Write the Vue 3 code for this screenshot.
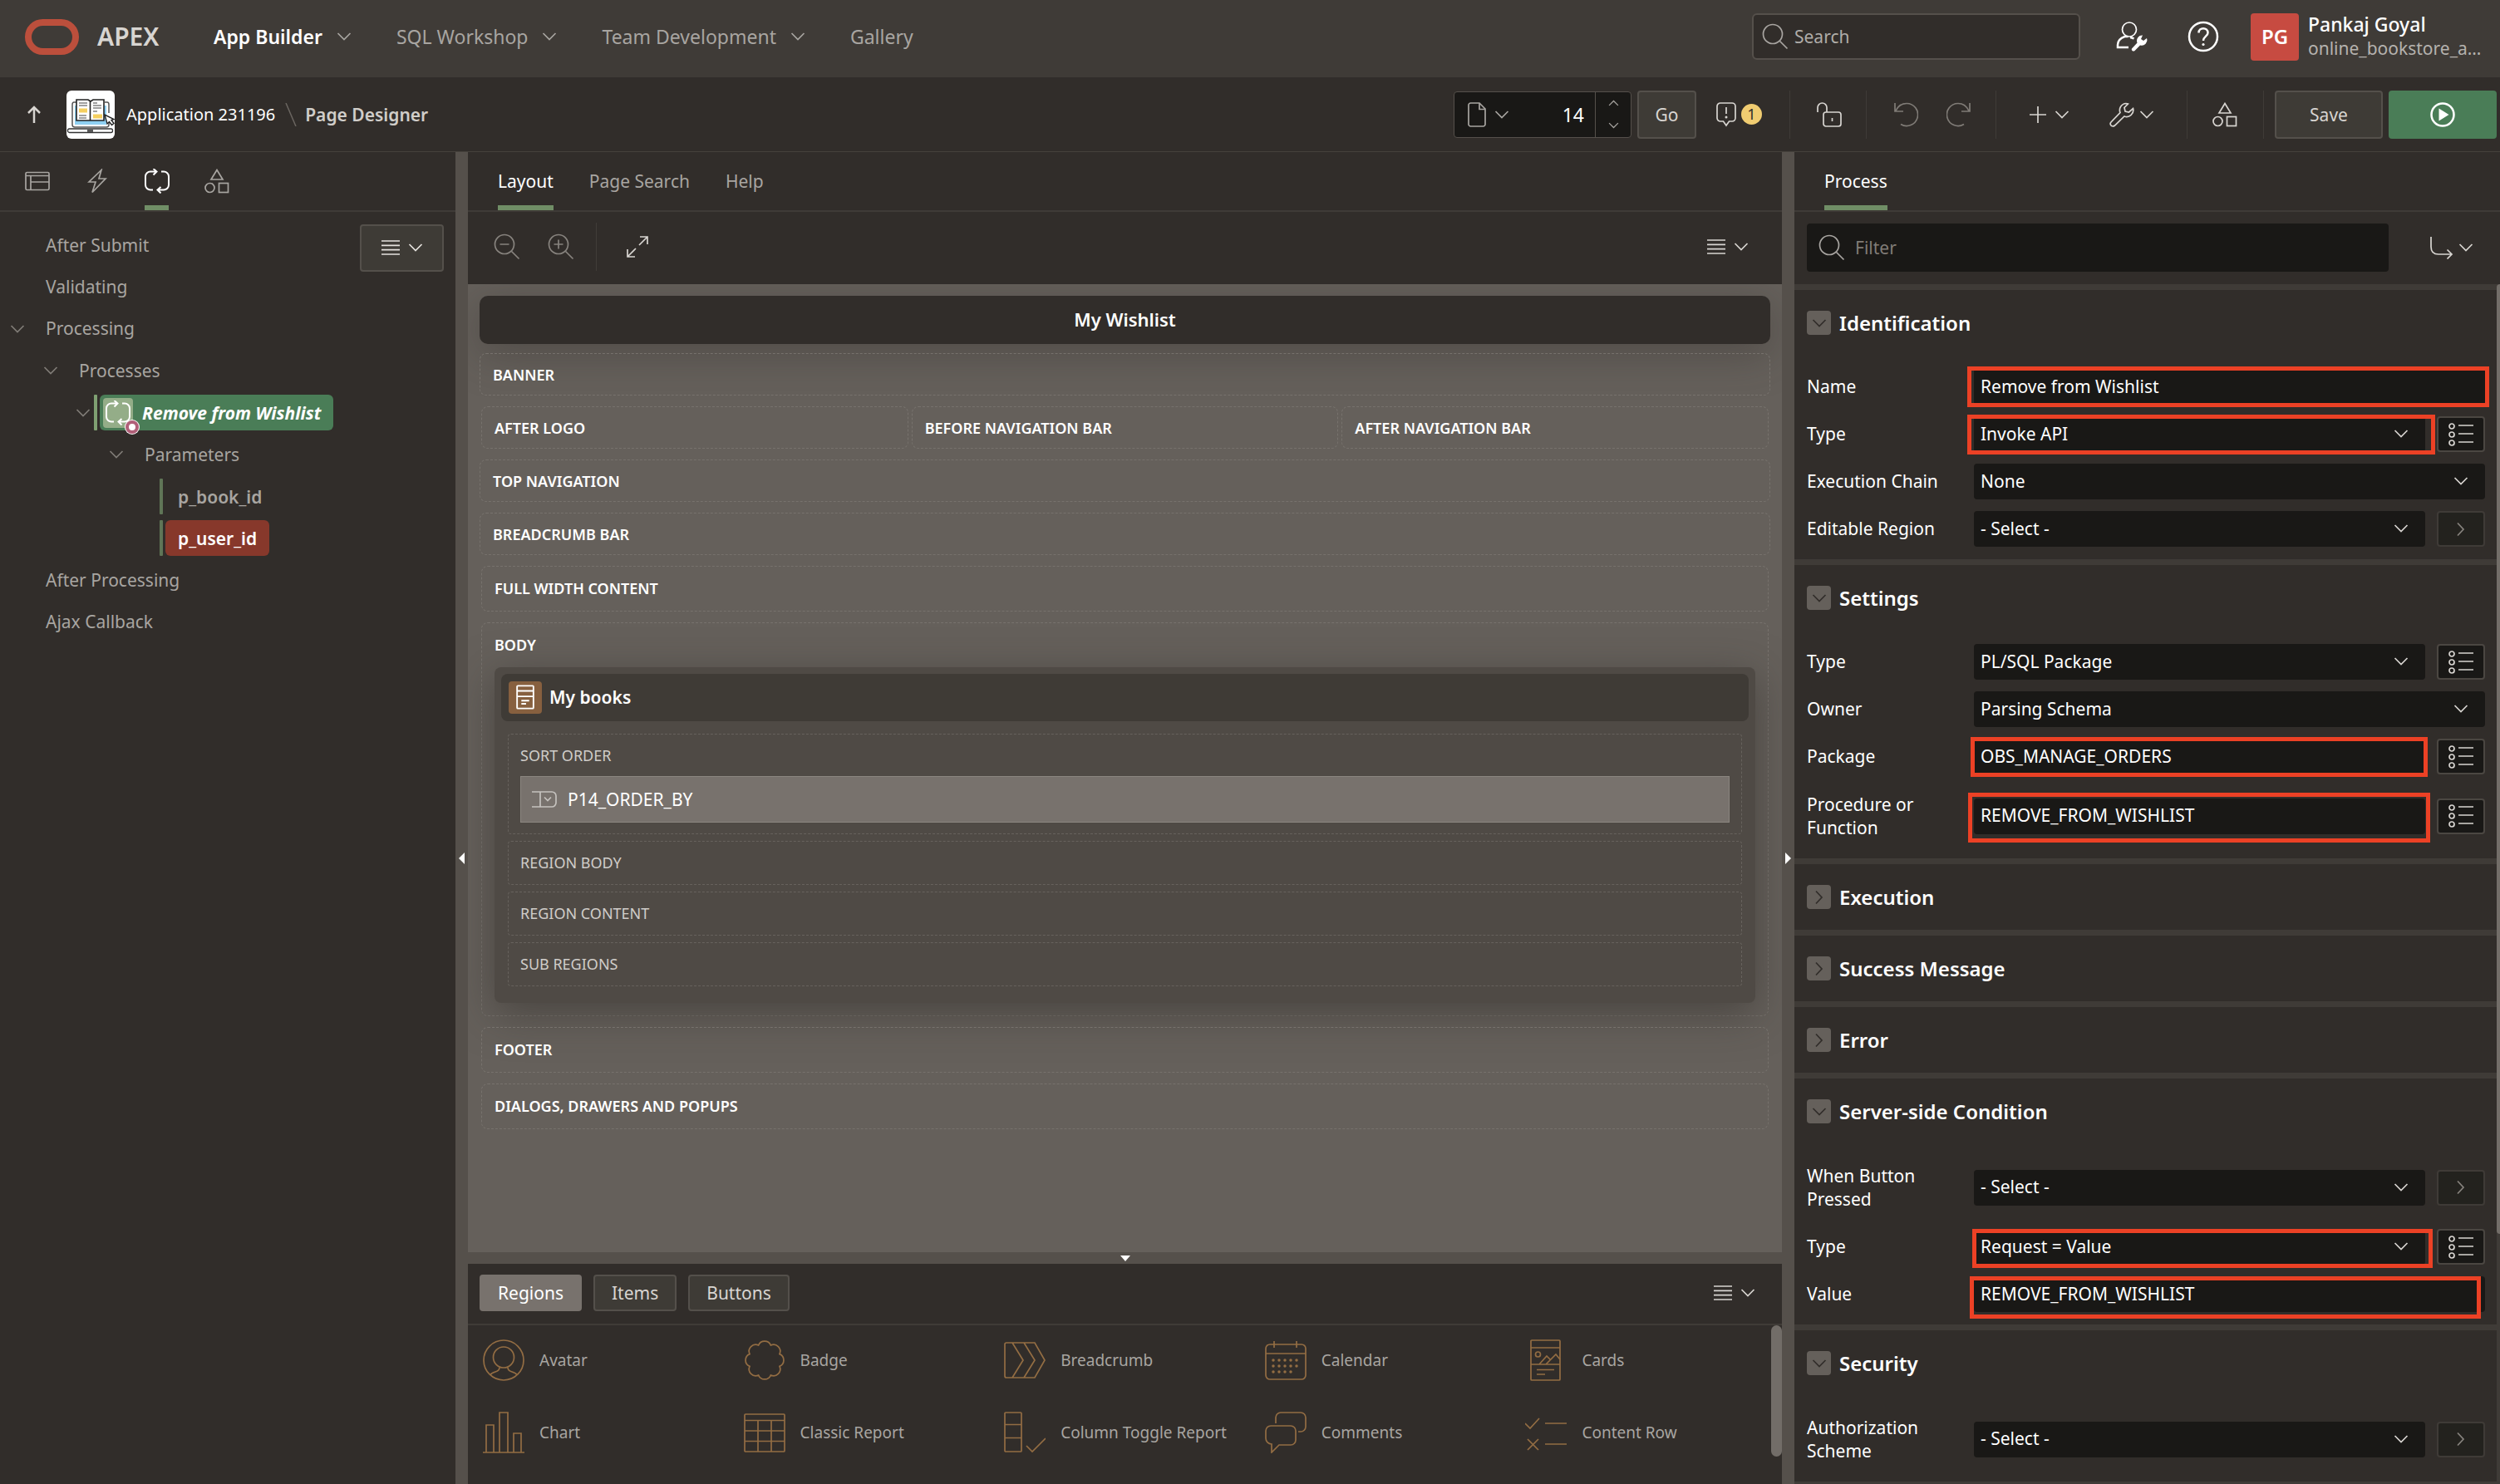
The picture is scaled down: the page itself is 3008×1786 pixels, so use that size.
<script setup>
import { h, reactive, ref } from 'vue'

const glyphs = {
  chevron: ['0 0 18 12', '<path d="M1.5 2 9 9.5 16.500 2"/>'],
  right: ['0 0 12 18', '<path d="M2 1.500 9 9 2 16.500"/>'],
  up: ['0 0 18 22', '<path d="M9 21V2M2 9 9 2 16 9" stroke-width="2.500"/>'],
  search: ['0 0 32 32', '<circle cx="13" cy="13" r="11.500"/><path d="m21.500 21.500 9 9"/>'],
  zoomOut: ['0 0 32 32', '<circle cx="13" cy="13" r="11.500"/><path d="m21.500 21.500 9 9M7.500 13h11"/>'],
  zoomIn: ['0 0 32 32', '<circle cx="13" cy="13" r="11.500"/><path d="m21.500 21.500 9 9M7.500 13h11M13 7.500v11"/>'],
  expand: ['0 0 28 28', '<path d="M17 2h9v9M26 2 16 12M11 26H2v-9M2 26l10-10"/>'],
  menu: ['0 0 22 20', '<path d="M0 2h22M0 7.300h22M0 12.600h22M0 18h22"/>'],
  admin: ['0 0 38 38', '<circle cx="16" cy="10.500" r="8.500"/><path d="M15 32H2v-3c0-5 3-8 8.500-10h4M17 20c2 .3 3 .8 4.500 1.500" stroke-width="2.500"/><path d="M32 17.500a6.500 6.500 0 0 0-6.500 9l-6.500 7c-1 2 1.500 4 3.300 2.700l6.700-6.800a6.500 6.500 0 0 0 8-8.400l-4 3-3-2z" fill="currentColor" stroke="none"/>'],
  help: ['0 0 38 38', '<circle cx="19" cy="19" r="17" stroke-width="2.500"/><path d="M13.500 14.500c0-7 11-7 11 0 0 4-5.500 4.500-5.500 9.500" stroke-width="2.500"/><circle cx="19" cy="28.500" r="1.600" fill="currentColor" stroke="none"/>'],
  file: ['0 0 22 30', '<path d="M1 3.500A2.500 2.500 0 0 1 3.500 1H14l7 7v18.500a2.500 2.500 0 0 1-2.500 2.500h-15A2.500 2.500 0 0 1 1 26.500zM14 1v7.500h7"/>'],
  comment: ['0 0 24 30', '<path d="M5 1h14a4 4 0 0 1 4 4v14a4 4 0 0 1-4 4h-3.500L12 28l-3.500-5H5a4 4 0 0 1-4-4V5a4 4 0 0 1 4-4zM12 6v8"/><circle cx="12" cy="18" r="1.500" fill="currentColor" stroke="none"/>'],
  unlock: ['0 0 30 30', '<path d="M1 12V6.500a5.500 5.500 0 0 1 11 0V12"/><rect x="8" y="12" width="21" height="17" rx="3"/><path d="M18.500 19v4"/>'],
  undo: ['0 0 30 30', '<path d="M2 1v10h10M3 10.500C6 4 11 1.500 16 1.500a13.500 13.500 0 1 1-7 25"/>'],
  redo: ['0 0 30 30', '<path d="M28 1v10H18M27 10.500C24 4 19 1.500 14 1.500a13.500 13.500 0 1 0 7 25"/>'],
  plus: ['0 0 20 20', '<path d="M10 0v20M0 10h20"/>'],
  wrench: ['0 0 30 30', '<path d="M20 1.500a8 8 0 0 0-7 11L2 24c-2.500 3 1.500 6.500 4.500 4L18 17a8 8 0 0 0 10.500-9.500l-5 4.500-4.500-1-1-4.500 4.500-4.500c-.8-.4-1.600-.5-2.500-.5z"/>'],
  shapes: ['0 0 30 30', '<path d="M15 1.500 8 13h14z"/><circle cx="6.500" cy="23" r="5.500"/><rect x="17.500" y="17.500" width="11" height="11"/>'],
  play: ['0 0 30 30', '<circle cx="15" cy="15" r="13.500" stroke-width="2.500"/><path d="M10.500 7.500 22.500 15l-12 7.500z" fill="currentColor" stroke="none"/>'],
  page: ['0 0 30 24', '<rect x="1" y="1.500" width="28" height="21" rx="1.500"/><path d="M1 5.500h28M7 5.500v17M7 13h22"/>'],
  bolt: ['0 0 24 30', '<path d="M17 1.500 2 16h8L6 28.500 22 12h-8z"/>'],
  process: ['0 0 30 30', '<path d="M10 25.500H7a6 6 0 0 1-6-6v-10a6 6 0 0 1 6-6h7M10.500 0 14.500 3.500l-4 4M20 3.500h3a6 6 0 0 1 6 6v10a6 6 0 0 1-6 6h-7M19.500 22 15.500 25.500l4 4" stroke-width="2"/>'],
  goto: ['0 0 28 28', '<path d="M1 1v12c0 6 3 9 9 9h16M20.500 16.500 26 22l-5.500 5.500"/>'],
  list: ['0 0 30 28', '<circle cx="4" cy="4" r="3"/><circle cx="4" cy="14" r="3"/><circle cx="4" cy="24" r="3"/><path d="M12 3h18M12 13h18M12 23h18"/>'],
  report: ['0 0 24 32', '<rect x="1.500" y="1.500" width="21" height="29" rx="1"/><path d="M1.500 8h21M1.500 15h21M7 20.500h10M7 24.500h6"/>'],
  selectItem: ['0 0 30 20', '<path d="M0 1h24a5 5 0 0 1 5 5v8a5 5 0 0 1-5 5H0M10 1v18M15 7.500l4 4 4-4"/>'],
  avatar: ['0 0 50 50', '<circle cx="25" cy="25" r="24"/><circle cx="25" cy="21.500" r="12.500"/><path d="M20 34c0 3-2 4-5 5s-5 2-6 3.500M30 34c0 3 2 4 5 5s5 2 6 3.500"/>'],
  badge: ['0 0 50 50', '<path d="M17.600 7a8 8 0 0 1 14.800 0A8 8 0 0 1 43 17.600a8 8 0 0 1 0 14.800A8 8 0 0 1 32.400 43a8 8 0 0 1-14.800 0A8 8 0 0 1 7 32.400a8 8 0 0 1 0-14.800A8 8 0 0 1 17.600 7z"/>'],
  breadcrumb: ['0 0 50 50', '<path d="M3 4h34l12 21-12 21H3a2 2 0 0 1-2-2V6a2 2 0 0 1 2-2zM10 4l13 21-13 21M24 4l13 21-13 21"/>'],
  calendar: ['0 0 50 50', '<rect x="1" y="6" width="48" height="42" rx="5"/><path d="M1 17h48M11 2v8M38 2v8"/><path d="M10 25h32M10 32h32M10 39h26" stroke-width="3.500" stroke-dasharray="0 7" stroke-linecap="round"/>'],
  cards: ['0 0 50 50', '<rect x="7" y="1" width="35" height="48" rx="1"/><path d="M7 10h35M7 30h35M14 36.500h21M14 42h10M17 30l9-10 5 5M25 30l12-12 5 6"/><circle cx="15.500" cy="18" r="3"/>'],
  chart: ['0 0 50 50', '<path d="M0 49h50M4 49V16h9v33M20 49V1h10v48M37 49V26h9v23"/>'],
  table: ['0 0 50 50', '<rect x="1" y="3" width="48" height="45" rx="1"/><path d="M1 10.500h48M1 23h48M1 35.500h48M17 10.500V48M33 10.500V48"/>'],
  columns: ['0 0 50 50', '<rect x="1" y="1" width="20" height="47" rx="1"/><path d="M1 15.500h20M1 31.500h20M27 41l7 7 16-16"/>'],
  comments: ['0 0 50 50', '<path d="M8 39a7 7 0 0 1-7-7V23a6 6 0 0 1 6-6h24a6 6 0 0 1 6 6v11a6 6 0 0 1-6 6H17l-9 9zM13 14V7a6 6 0 0 1 6-6h24a6 6 0 0 1 6 6v11a6 6 0 0 1-6 6h-3"/>'],
  contentRow: ['0 0 50 50', '<path d="M0 14l6 6L17 8M24 14h26M3 33l13 13M16 33 3 46M24 39h26"/>'],
  form: ['0 0 50 50', '<rect x="1" y="1" width="48" height="48" rx="2"/>'],
  circle: ['0 0 50 50', '<circle cx="25" cy="10" r="9"/>'],
}
const Icon = (p) => {
  const [viewBox, innerHTML] = glyphs[p.name]
  return h('svg', {
    viewBox, innerHTML, fill: 'none', stroke: 'currentColor', 'stroke-width': 1.7,
    'aria-hidden': 'true', width: viewBox.split(' ')[2], height: viewBox.split(' ')[3],
  })
}
Icon.props = ['name']

const nav = [
  { label: 'App Builder', menu: true, active: true },
  { label: 'SQL Workshop', menu: true },
  { label: 'Team Development', menu: true },
  { label: 'Gallery' },
]
const treeTabs = ['page', 'bolt', 'process', 'shapes']
const tree = [
  { label: 'After Submit', level: 0 },
  { label: 'Validating', level: 0 },
  { label: 'Processing', level: 0, open: true },
  { label: 'Processes', level: 1, open: true },
  { label: 'Remove from Wishlist', level: 2, open: true, bar: true, selected: true },
  { label: 'Parameters', level: 3, open: true },
  { label: 'p_book_id', level: 4, bar: true },
  { label: 'p_user_id', level: 4, bar: true, error: true },
  { label: 'After Processing', level: 0 },
  { label: 'Ajax Callback', level: 0 },
]
const galleryTabs = ['Regions', 'Items', 'Buttons']
const gallery = [
  ['avatar', 'Avatar'], ['badge', 'Badge'], ['breadcrumb', 'Breadcrumb'], ['calendar', 'Calendar'], ['cards', 'Cards'],
  ['chart', 'Chart'], ['table', 'Classic Report'], ['columns', 'Column Toggle Report'], ['comments', 'Comments'], ['contentRow', 'Content Row'],
  ['', ''], ['form', ''], ['', ''], ['circle', ''], ['form', ''],
]
const innerSlots = ['Region Body', 'Region Content', 'Sub Regions']
const pageNo = ref('14')

// mark: top, right, bottom and left distance of the highlight from its field
const sections = reactive([
  { title: 'Identification', fields: [
    { label: 'Name', value: 'Remove from Wishlist', mark: [-3, -5, -3, -8] },
    { label: 'Type', value: 'Invoke API', select: true, side: 'list', mark: [-2, -12, -3, -8] },
    { label: 'Execution Chain', value: 'None', select: true },
    { label: 'Editable Region', value: '- Select -', select: true, side: 'right' },
  ] },
  { title: 'Settings', fields: [
    { label: 'Type', value: 'PL/SQL Package', select: true, side: 'list' },
    { label: 'Owner', value: 'Parsing Schema', select: true },
    { label: 'Package', value: 'OBS_MANAGE_ORDERS', side: 'list', mark: [-2, -3, -3, -4] },
    { label: 'Procedure or Function', value: 'REMOVE_FROM_WISHLIST', side: 'list', tall: true, mark: [-7, -6, -10, -7] },
  ] },
  { title: 'Execution' },
  { title: 'Success Message' },
  { title: 'Error' },
  { title: 'Server-side Condition', fields: [
    { label: 'When Button Pressed', value: '- Select -', select: true, side: 'right', tall: true },
    { label: 'Type', value: 'Request = Value', select: true, side: 'list', mark: [0, -9, -4, -2] },
    { label: 'Value', value: 'REMOVE_FROM_WISHLIST', mark: [0, 5, -8, -5] },
  ] },
  { title: 'Security', fields: [
    { label: 'Authorization Scheme', value: '- Select -', select: true, side: 'right', tall: true },
  ] },
])
const inset = (m) => ({ inset: m.map((n) => n + 'px').join(' ') })
</script>

<template>
  <div class="app">
    <header class="topbar">
      <a class="brand" href="#">
        <svg width="65" height="43" viewBox="0 0 65 43" aria-hidden="true"><rect x="4" y="4" width="57" height="35" rx="17.500" fill="none" stroke="#bc4f3c" stroke-width="8" /></svg>
        <span>APEX</span>
      </a>
      <nav class="nav">
        <a v-for="n in nav" :key="n.label" href="#" :class="{ active: n.active }">{{ n.label }}<Icon v-if="n.menu" name="chevron" /></a>
      </nav>
      <label class="search"><Icon name="search" /><input type="text" placeholder="Search" aria-label="Search" /></label>
      <button class="bare admin" aria-label="Administration"><Icon name="admin" /></button>
      <button class="bare help" aria-label="Help"><Icon name="help" /></button>
      <div class="user">
        <span class="initials">PG</span>
        <div class="who"><strong>Pankaj Goyal</strong><span>online_bookstore_a…</span></div>
      </div>
    </header>

    <div class="toolbar">
      <button class="bare up" aria-label="Up"><Icon name="up" /></button>
      <svg class="appicon" width="58" height="58" viewBox="0 0 58 58" aria-hidden="true">
        <rect width="58" height="58" rx="6" fill="#fff" />
        <rect x="10" y="18" width="38" height="23" fill="#8fd0f2" />
        <path d="M12 14H9q-2 0-2 3v24q0 3 3 3h38q3 0 3-3v-6M46 14h3q2 0 2 3v10" fill="none" stroke="#555" stroke-width="1.500" />
        <path d="M12 11h14l3 2 3-2h13v25H12z" fill="#fff" stroke="#222" stroke-width="1.600" />
        <path d="M28.500 13v23" stroke="#222" stroke-width="1.600" />
        <path d="M15 15h10M15 18h10M15 30h9M15 33h9M32 15h5M32 18h10M32 21h10M32 25h5" stroke="#444" stroke-width="1.200" />
        <path d="M15 21.500h10v5H15zM32 28.500h11v5H32z" fill="#f5cf5f" />
        <path d="m46 29 3 11 2.500-2.500 3 4 2.500-2-3-4 3-1z" fill="#fff" stroke="#222" stroke-width="1.400" />
        <rect x="1.500" y="46" width="54" height="4.500" rx="2" fill="#fff" stroke="#333" stroke-width="1.300" />
        <rect x="25" y="47" width="7" height="3" fill="#555" />
      </svg>
      <a class="crumb" href="#">Application 231196</a>
      <svg class="slash" width="14" height="28" viewBox="0 0 14 28" aria-hidden="true"><path d="m1 0 12 28" stroke="#6b6661" stroke-width="1.500" /></svg>
      <a class="crumb here" href="#">Page Designer</a>
      <div class="pagebox">
        <button class="bare pick" aria-label="Pages"><Icon name="file" /><Icon name="chevron" /></button>
        <input v-model="pageNo" type="text" aria-label="Page number" />
        <span class="step">
          <button class="bare" aria-label="Next page"><Icon name="chevron" class="flip" /></button>
          <button class="bare" aria-label="Previous page"><Icon name="chevron" /></button>
        </span>
      </div>
      <button class="btn go">Go</button>
      <button class="bare msgs" aria-label="Messages"><Icon name="comment" /><span class="count">1</span></button>
      <div class="grp lock"><button class="bare" aria-label="Unlock"><Icon name="unlock" /></button></div>
      <div class="grp history">
        <button class="bare" aria-label="Undo"><Icon name="undo" /></button>
        <button class="bare" aria-label="Redo"><Icon name="redo" /></button>
      </div>
      <div class="grp create">
        <button class="bare" aria-label="Create"><Icon name="plus" /><Icon name="chevron" /></button>
        <button class="bare tight" aria-label="Utilities"><Icon name="wrench" /><Icon name="chevron" /></button>
      </div>
      <div class="grp shared"><button class="bare" aria-label="Shared components"><Icon name="shapes" /></button></div>
      <div class="grp actions">
        <button class="btn wide">Save</button>
        <button class="btn wide run" aria-label="Run"><Icon name="play" /></button>
      </div>
    </div>

    <main class="work">
      <aside class="left">
        <div class="tabs icons">
          <button v-for="t in treeTabs" :key="t" class="tab" :class="{ on: t === 'process' }" :aria-label="t"><Icon :name="t" /></button>
        </div>
        <div class="treewrap">
          <ul class="tree">
            <li v-for="n in tree" :key="n.label" :class="'l' + n.level">
              <Icon v-if="n.open" name="chevron" class="twist" />
              <i v-if="n.bar" class="bar" :class="{ lit: n.selected }"></i>
              <span class="node" :class="{ selected: n.selected, error: n.error, strong: n.level === 4 }">
                <span v-if="n.selected" class="nicon"><Icon name="process" /><i class="dot"></i></span>{{ n.label }}
              </span>
            </li>
          </ul>
          <button class="btn treemenu" aria-label="Tree menu"><Icon name="menu" /><Icon name="chevron" /></button>
        </div>
      </aside>
      <div class="split"><i class="arrow west"></i></div>

      <section class="center">
        <div class="tabs">
          <button class="tab on">Layout</button><button class="tab">Page Search</button><button class="tab">Help</button>
        </div>
        <div class="ltools">
          <button class="bare dim" aria-label="Zoom out"><Icon name="zoomOut" /></button>
          <button class="bare dim" aria-label="Zoom in"><Icon name="zoomIn" /></button>
          <i class="rule"></i>
          <button class="bare" aria-label="Expand"><Icon name="expand" /></button>
          <button class="bare menubtn" aria-label="Layout menu"><Icon name="menu" /><Icon name="chevron" /></button>
        </div>
        <div class="canvas">
          <h1>My Wishlist</h1>
          <div class="slot">Banner</div>
          <div class="slots"><div class="slot">After Logo</div><div class="slot">Before Navigation Bar</div><div class="slot">After Navigation Bar</div></div>
          <div class="slot">Top Navigation</div>
          <div class="slot">Breadcrumb Bar</div>
          <div class="slot main">Full Width Content</div>
          <div class="slot main body">
            Body
            <div class="region">
              <h2><span class="ricon"><Icon name="report" /></span>My books</h2>
              <div class="inner first">
                Sort Order
                <div class="item"><Icon name="selectItem" />P14_ORDER_BY</div>
              </div>
              <div v-for="s in innerSlots" :key="s" class="inner">{{ s }}</div>
            </div>
          </div>
          <div class="slot main">Footer</div>
          <div class="slot main">Dialogs, Drawers and Popups</div>
        </div>
        <div class="hsplit"><i class="arrow south"></i></div>
        <div class="gtools">
          <button v-for="(t, i) in galleryTabs" :key="t" class="btn" :class="{ on: i === 0 }">{{ t }}</button>
          <button class="bare menubtn" aria-label="Gallery menu"><Icon name="menu" /><Icon name="chevron" /></button>
        </div>
        <div class="gallery">
          <ul>
            <li v-for="(g, i) in gallery" :key="i"><Icon v-if="g[0]" :name="g[0]" />{{ g[1] }}</li>
          </ul>
          <div class="track"><i></i></div>
        </div>
      </section>
      <div class="split"><i class="arrow east"></i></div>

      <aside class="right">
        <div class="tabs"><button class="tab on">Process</button></div>
        <div class="filter">
          <label><Icon name="search" /><input type="text" placeholder="Filter" aria-label="Filter" /></label>
          <button class="bare" aria-label="Go to group"><Icon name="goto" /><Icon name="chevron" /></button>
        </div>
        <div class="props">
          <div class="groups">
            <section v-for="(s, si) in sections" :key="s.title" class="group">
              <h3><button class="toggle" :aria-label="'Toggle ' + s.title"><Icon :name="s.fields ? 'chevron' : 'right'" /></button>{{ s.title }}</h3>
              <div v-if="s.fields" class="fields">
                <div v-for="(f, fi) in s.fields" :key="f.label" class="field" :class="{ tall: f.tall }">
                  <label :for="`f${si}-${fi}`">{{ f.label }}</label>
                  <div class="ctl">
                    <template v-if="f.select">
                      <select :id="`f${si}-${fi}`" v-model="f.value"><option>{{ f.value }}</option></select>
                      <Icon name="chevron" class="drop" />
                    </template>
                    <input v-else :id="`f${si}-${fi}`" v-model="f.value" type="text" />
                    <i v-if="f.mark" class="mark" :style="inset(f.mark)"></i>
                  </div>
                  <button v-if="f.side" class="side" :class="f.side" :aria-label="'Pick ' + f.label"><Icon :name="f.side" /></button>
                </div>
              </div>
            </section>
          </div>
          <div class="vtrack"><i></i></div>
        </div>
      </aside>
    </main>
  </div>
</template>

<style>
body { margin: 0; background: #312d2a; }
</style>

<style scoped>
.app, .app * { box-sizing: border-box; }
.app { display: flex; flex-direction: column; height: 100vh; overflow: hidden; background: #312d2a; color: #fff; font: 21px/28px "Noto Sans", "Open Sans", sans-serif; }
svg { flex: none; display: block; }
a { color: inherit; text-decoration: none; }
button, input, select { font: inherit; color: inherit; margin: 0; }
button { padding: 0; border: 0; background: none; }
input { border: 0; background: none; outline: 0; min-width: 0; }
ul { list-style: none; margin: 0; padding: 0; }
h1, h2, h3 { margin: 0; font: inherit; }
.bare { display: flex; align-items: center; color: #d8d5d1; }
.btn { display: flex; align-items: center; justify-content: center; border: 2px solid #54504b; border-radius: 4px; background: #3e3b36; color: #d8d5d1; }
.flip { transform: rotate(180deg); }

.topbar { flex: none; display: flex; align-items: center; height: 93px; padding: 0 4px 4px 30px; background: #3f3b37; border-bottom: 1px solid #403c38; }
.brand { display: flex; align-items: center; width: 227px; gap: 22px; color: #d8d5d1; font-size: 30px; font-weight: 600; }
.nav { display: flex; align-items: center; gap: 54px; font-size: 23px; color: #a8a5a1; }
.nav a { display: flex; align-items: center; gap: 17px; }
.nav .active { color: #fff; font-weight: 600; }
.nav svg { color: #a8a5a1; }
.search { display: flex; align-items: center; gap: 5px; width: 395px; height: 56px; margin-left: auto; padding: 0 10px; border: 2px solid #55504b; border-radius: 6px; background: #312d2a; color: #a8a5a1; }
.search input { flex: 1; }
.search input::placeholder { color: #b0ada9; opacity: 1; }
.admin, .help { color: #fff; }
.admin { margin-left: 43px; }
.help { margin-left: 48px; }
.user { display: flex; align-items: center; gap: 11px; width: 296px; margin-left: 38px; }
.initials { display: flex; align-items: center; justify-content: center; width: 58px; height: 57px; border-radius: 4px; background: #c74b41; font-size: 24px; font-weight: 600; }
.who { display: flex; flex-direction: column; line-height: 29px; }
.who strong { font-weight: 500; font-size: 23px; }
.who span { color: #b5b2ae; }

.toolbar { flex: none; display: flex; align-items: center; height: 90px; padding: 0 4px 0 32px; border-bottom: 1px solid #45413c; }
.up { width: 48px; }
.appicon { margin-right: 14px; }
.slash { margin: 0 10px 0 12px; }
.crumb { font-size: 20px; }
.crumb.here { color: #d0cdc9; font-size: 21px; font-weight: 600; }
.pagebox { display: flex; align-items: stretch; width: 214px; height: 56px; margin-left: auto; border: 1px solid #55504b; border-radius: 4px; background: #191816; font-size: 23px; }
.pick { gap: 10px; padding-left: 16px; color: #a8a5a1; }
.pagebox input { flex: 1; width: 0; padding: 0 13px 0 0; text-align: right; }
.step { display: flex; flex-direction: column; justify-content: space-around; width: 43px; border-left: 1px solid #55504b; }
.step button { justify-content: center; color: #a8a5a1; }
.step svg { width: 13px; }
.go { width: 71px; height: 58px; margin: 0 24px 0 7px; }
.msgs { gap: 6px; width: 88px; }
.count { width: 25px; height: 25px; border-radius: 50%; background: #f0cc71; color: #312d2a; font-size: 18px; line-height: 25px; text-align: center; }
.grp { display: flex; align-items: center; height: 58px; border-left: 1px solid #3f3b37; }
.lock { width: 92px; padding-left: 32px; }
.history { width: 156px; padding-left: 32px; gap: 34px; }
.history button { color: #807c77; }
.create { width: 230px; padding-left: 40px; gap: 48px; }
.create button { gap: 10px; }
.create .tight { gap: 6px; }
.shared { width: 92px; padding-left: 30px; }
.actions { padding-left: 13px; gap: 7px; }
.wide { width: 130px; height: 58px; }
.run { border: 0; background: #4a7d57; color: #fff; }

.work { flex: 1; display: flex; min-height: 0; }
.left { flex: none; width: 548px; }
.right { flex: none; width: 849px; display: flex; flex-direction: column; }
.center { flex: 1; min-width: 0; display: flex; flex-direction: column; }
.split { flex: none; display: flex; align-items: center; justify-content: center; width: 15px; padding-top: 96px; background: #55504b; }
.hsplit { flex: none; display: flex; align-items: center; justify-content: center; height: 14px; background: #55504b; }
.arrow { border: 6px solid transparent; }
.west { border-width: 7px 7px 7px 0; border-right-color: #fff; }
.east { border-width: 7px 0 7px 7px; border-left-color: #fff; }
.south { border-width: 7px 6px 0; border-top-color: #fff; }

.tabs { flex: none; display: flex; gap: 43px; height: 72px; padding-left: 36px; border-bottom: 2px solid #3f3b37; }
.tab { height: 70px; padding-top: 5px; border-bottom: 6px solid transparent; color: #a8a5a1; }
.tab.on { color: #fff; border-color: #708e66; }
.icons { padding-left: 30px; gap: 43px; }
.icons .tab { display: flex; align-items: center; justify-content: center; width: 29px; padding-top: 6px; }

.treewrap { display: flex; justify-content: space-between; padding: 15px 14px 0 0; }
.treemenu { width: 101px; height: 57px; padding-bottom: 2px; gap: 10px; color: #e5e2de; }
.tree { display: grid; grid-auto-rows: 1fr; height: 504px; color: #a8a5a1; }
.tree li { display: flex; align-items: center; position: relative; }
.l0 { padding-left: 55px; }
.l1 { padding-left: 95px; }
.l2 { padding-left: 113px; }
.l3 { padding-left: 174px; }
.l4 { padding-left: 192px; }
.twist { position: absolute; left: 12px; color: #807c77; }
.l1 .twist { left: 52px; }
.l2 .twist { left: 91px; }
.l3 .twist { left: 131px; }
.bar { width: 4px; height: 43px; margin-right: 3px; border-radius: 1px; background: #5f7556; }
.bar.lit { background: #7fa072; }
.node { display: flex; align-items: center; height: 43px; padding-bottom: 1px; border-radius: 6px; white-space: nowrap; }
.strong { padding: 0 15px; font-weight: 600; }
.error { background: #87382b; color: #fff; }
.selected { gap: 11px; padding: 0 15px 0 4px; background: #4a7d57; color: #fff; font-weight: 700; font-style: italic; }
.nicon { position: relative; display: flex; align-items: center; justify-content: center; width: 36px; height: 36px; border-radius: 4px; background: #94ad88; }
.dot { position: absolute; right: -7px; bottom: -7px; width: 16px; height: 16px; border: 4px solid #b05f78; border-radius: 50%; background: #fff; box-shadow: 0 0 0 1px #fff; }

.ltools { flex: none; display: flex; align-items: center; height: 87px; padding: 0 40px 4px 31px; }
.ltools .dim { color: #87837e; width: 65px; }
.rule { width: 1px; height: 58px; margin: 0 35px 0 -7px; background: #403c38; }
.menubtn { gap: 10px; margin-left: auto; }
.canvas { flex: 1; display: flex; flex-direction: column; gap: 13px; min-height: 0; overflow: hidden; padding: 14px 14px 0; background: #65605b; font-size: 18px; line-height: 26px; text-transform: uppercase; }
h1 { flex: none; height: 58px; margin-bottom: -2px; padding-bottom: 2px; border-radius: 10px; background: #312d2a; box-shadow: 0 12px 50px rgb(49 45 42 / 40%); font-size: 22px; line-height: 56px; font-weight: 600; text-align: center; text-transform: none; }
.slot { flex: none; height: 51px; padding: 12px 15px; border: 1px dashed #77726d; border-radius: 8px; font-weight: 600; }
.slots { flex: none; display: grid; grid-template-columns: repeat(3, 1fr); gap: 4px; margin: 0 2px; }
.main { height: 55px; margin: 0 2px; padding: 13px 15px; }
.body { height: 474px; }
.region { height: 404px; margin-top: 14px; padding: 8px; border-radius: 8px; background: #4f4a45; box-shadow: 0 12px 50px rgb(49 45 42 / 55%); font-weight: 400; }
h2 { display: flex; align-items: center; gap: 9px; height: 57px; padding: 0 0 1px 9px; border-radius: 8px; background: #3f3b36; font-size: 21px; font-weight: 600; text-transform: none; }
.ricon { display: flex; align-items: center; justify-content: center; width: 40px; height: 39px; border-radius: 4px; background: #87603f; }
.ricon svg { height: 30px; stroke-width: 2; }
.inner { height: 53px; margin: 8px 8px 0; padding: 12px 14px; border: 1px dashed #67625d; border-radius: 4px; color: #d0cdc9; }
.inner.first { height: 121px; margin-top: 15px; }
.item { display: flex; align-items: center; gap: 13px; height: 56px; margin-top: 12px; padding-left: 13px; border: 1px solid #8b8680; background: #78726d; color: #fff; font-size: 21px; }
.item svg { color: #c5c2be; }

.gtools { flex: none; display: flex; align-items: center; gap: 14px; height: 74px; padding: 0 32px 2px 14px; border-bottom: 2px solid #3f3b37; }
.gtools .btn { height: 44px; padding: 0 20px; }
.gtools .on { background: #78726d; border-color: #78726d; color: #fff; }
.gallery { flex: none; display: flex; height: 191px; overflow: hidden; color: #a8a5a1; font-size: 19px; }
.gallery ul { flex: 1; display: grid; grid-template-columns: repeat(5, 1fr); grid-auto-rows: 87px; }
.gallery li { display: flex; align-items: center; gap: 18px; padding: 0 0 3px 18px; white-space: nowrap; }
.gallery svg { color: #936d43; }
.track { width: 13px; }
.track i { display: block; height: 158px; border-radius: 7px; background: #726d68; }

.filter { flex: none; display: flex; align-items: center; height: 87px; padding: 0 32px 1px 15px; }
.filter label { display: flex; align-items: center; gap: 10px; width: 700px; height: 58px; padding-left: 14px; border-radius: 4px; background: #191816; color: #a8a5a1; }
.filter label input { flex: 1; }
.filter label input::placeholder { color: #807c77; opacity: 1; }
.filter .bare { gap: 6px; margin-left: auto; }
.props { flex: 1; display: flex; min-height: 0; overflow: hidden; }
.groups { flex: 1; }
.vtrack { width: 4px; background: #3f3b37; }
.vtrack i { display: block; height: 1143px; border-radius: 4px 0 0 4px; background: #726d68; }
.group { border-top: 7px solid #3f3b37; }
.group:last-child { border-bottom: 7px solid #3f3b37; }
h3 { display: flex; align-items: center; gap: 10px; height: 79px; padding-left: 15px; font-size: 24px; font-weight: 600; }
.toggle { display: flex; align-items: center; justify-content: center; width: 29px; height: 29px; border-radius: 4px; background: #65605b; color: #312d2a; }
.fields { display: flex; flex-direction: column; gap: 14px; padding: 16px 14px 15px 15px; }
.field { display: grid; grid-template-columns: 187px 1fr auto; column-gap: 14px; align-items: center; min-height: 43px; }
.field.tall { min-height: 72px; }
.field label { padding-bottom: 1px; }
.ctl { position: relative; display: flex; }
.ctl:last-child { grid-column: 2 / 4; }
.ctl input, .ctl select { width: 100%; height: 43px; padding: 0 8px 2px; border: 0; border-radius: 4px; background: #191816; color: #fff; appearance: none; }
.drop { position: absolute; top: 15px; right: 20px; color: #d8d5d1; }
.mark { position: absolute; z-index: 1; border: 5px solid #ec4125; pointer-events: none; }
.side { display: flex; align-items: center; justify-content: center; width: 58px; height: 43px; border: 2px solid #4b4742; border-radius: 4px; background: #191816; color: #d8d5d1; }
.side.right { flex: none; background: #23221e; color: #87837e; border-color: #3f3b37; }
</style>
